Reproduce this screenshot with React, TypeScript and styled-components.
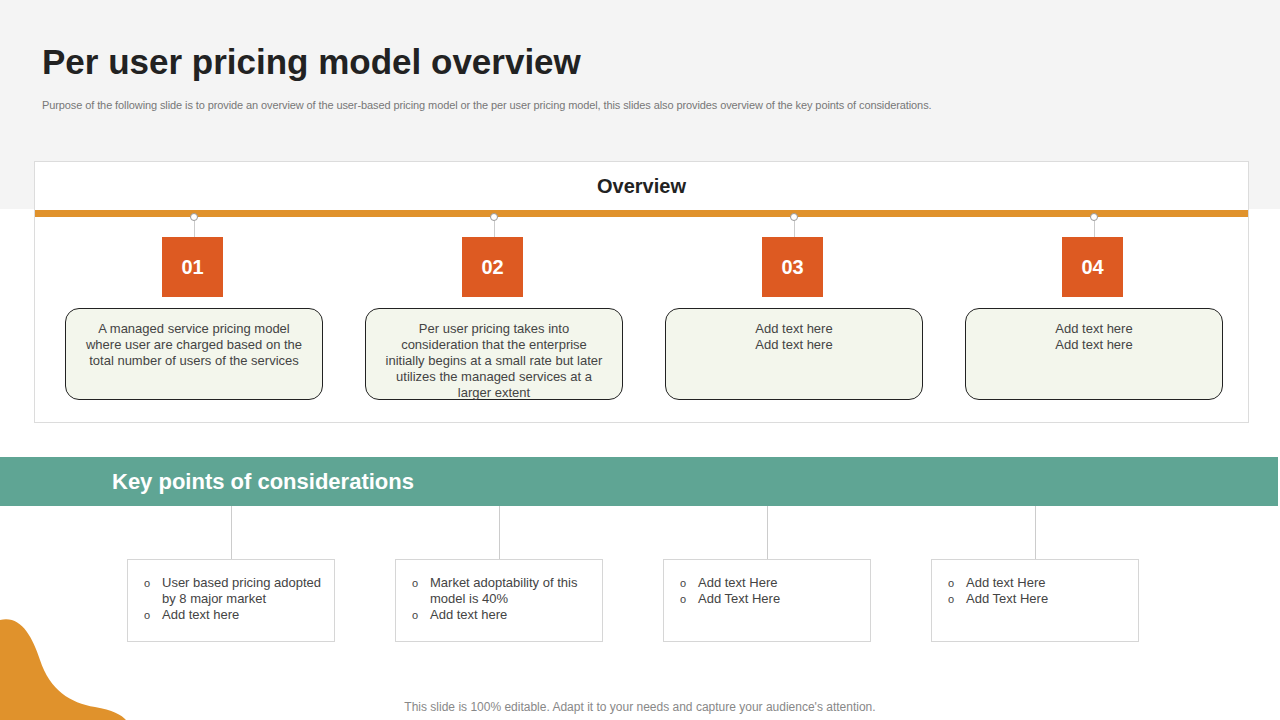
import React from "react";
import styled, { createGlobalStyle } from "styled-components";

const Global = createGlobalStyle`
  body { margin: 0; font-family: "Liberation Sans", Arial, sans-serif; background: #fff; }
`;
const Page = styled.div`
  width: 1280px; height: 720px; position: relative; overflow: hidden; background: #fff;
`;
const Top = styled.div`
  background: #f4f4f4; height: 209px; padding: 40px 0 0 42px; box-sizing: border-box;
`;
const Title = styled.h1`
  margin: 0; font-size: 35px; font-weight: 700; color: #222; line-height: 44px;
`;
const Sub = styled.p`
  margin: 15px 0 0; font-size: 11px; color: #777; letter-spacing: -0.1px;
`;
const Card = styled.div`
  position: relative; margin: -48px 0 0 34px; width: 1215px; height: 262px; box-sizing: border-box;
  background: #fff; border: 1px solid #dcdcdc;
`;
const CardHead = styled.div`
  height: 48px; display: flex; align-items: center; justify-content: center;
  font-size: 20px; font-weight: 700; color: #222;
`;
const Bar = styled.div`height: 7px; background: #e0922c;`;
const Cols = styled.div`
  display: grid; grid-template-columns: repeat(4, 300px); padding-left: 9px; margin-top: -4px;
`;
const Col = styled.div`display: flex; flex-direction: column; align-items: center;`;
const Dot = styled.div`
  width: 6px; height: 6px; border-radius: 50%; background: #fff; border: 1px solid #999; z-index: 1;
`;
const VLine = styled.div<{ h: number }>`width: 1px; height: ${p => p.h}px; background: #ccc;`;
const Num = styled.div`
  width: 61px; height: 60px; background: #dd5a22; color: #fff; font-size: 20px; font-weight: 700;
  display: flex; align-items: center; justify-content: center; margin-left: -3px;
`;
const Bubble = styled.div`
  margin-top: 11px; width: 258px; height: 92px; box-sizing: border-box; border: 1px solid #222;
  border-radius: 14px; background: #f3f6ec; padding: 12px 14px 0; text-align: center;
  font-family: "Liberation Sans Narrow", "Liberation Sans", Arial, sans-serif;
  font-size: 13px; line-height: 16px; color: #444;
`;
const Band = styled.div`
  margin-top: 34px; width: 1278px; height: 49px; background: #5fa594; color: #fff;
  font-size: 22px; font-weight: 700; display: flex; align-items: center; padding-left: 112px; box-sizing: border-box;
`;
const KCols = styled.div`
  display: grid; grid-template-columns: repeat(4, 268px); padding-left: 97px;
`;
const KCol = styled.div`display: flex; flex-direction: column; align-items: center;`;
const KBox = styled.ul`
  margin: 0; width: 208px; height: 83px; box-sizing: border-box; border: 1px solid #d6d6d6;
  list-style: none; padding: 15px 8px 0 16px;
  font-family: "Liberation Sans Narrow", "Liberation Sans", Arial, sans-serif;
  font-size: 13px; line-height: 16px; color: #444;
`;
const Item = styled.li`
  display: flex; gap: 9px;
  &::before { content: "o"; font-size: 11px; width: 9px; flex: none; }
`;
const Footer = styled.div`
  margin-top: 58px; text-align: center; font-size: 12px; color: #888;
  font-family: "Liberation Sans Narrow", "Liberation Sans", Arial, sans-serif;
`;
const Blob = styled.svg`position: absolute; left: 0; bottom: 0;`;

const over = [
  "A managed service pricing model where user are charged based on the total number of users of the services",
  "Per user pricing takes into consideration that the enterprise initially begins at a small rate but later utilizes the managed services at a larger extent",
  "Add text here\nAdd text here",
  "Add text here\nAdd text here",
];
const keys = [
  ["User based pricing adopted by 8 major market", "Add text here"],
  ["Market adoptability of this model is 40%", "Add text here"],
  ["Add text Here", "Add Text Here"],
  ["Add text Here", "Add Text Here"],
];

export default function App() {
  return (
    <Page>
      <Global />
      <Top>
        <Title>Per user pricing model overview</Title>
        <Sub>Purpose of the following slide is to provide an overview of the user-based pricing model or the per user pricing model, this slides also provides overview of the key points of considerations.</Sub>
      </Top>
      <Card>
        <CardHead>Overview</CardHead>
        <Bar />
        <Cols>
          {over.map((t, i) => (
            <Col key={i}>
              <Dot />
              <VLine h={16} />
              <Num>{`0${i + 1}`}</Num>
              <Bubble style={{ whiteSpace: "pre-line" }}>{t}</Bubble>
            </Col>
          ))}
        </Cols>
      </Card>
      <Band>Key points of considerations</Band>
      <KCols>
        {keys.map((k, i) => (
          <KCol key={i}>
            <VLine h={53} />
            <KBox>{k.map((s, j) => <Item key={j}>{s}</Item>)}</KBox>
          </KCol>
        ))}
      </KCols>
      <Footer>This slide is 100% editable. Adapt it to your needs and capture your audience's attention.</Footer>
      <Blob width="130" height="105" viewBox="0 0 130 105">
        <path d="M0 5 C20 0 32 20 40 45 C50 75 70 88 95 92 C112 95 122 100 126 105 L0 105 Z" fill="#e0922c" />
      </Blob>
    </Page>
  );
}
